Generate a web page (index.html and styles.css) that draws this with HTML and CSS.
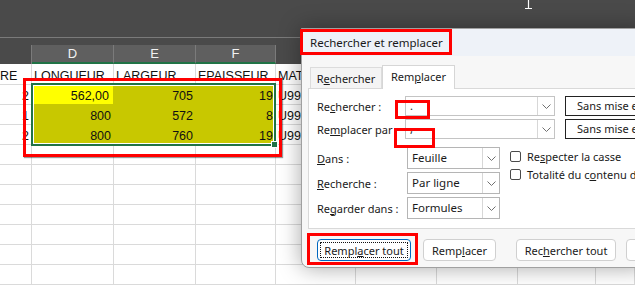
FILE: index.html
```html
<!DOCTYPE html>
<html lang="fr">
<head>
    <meta charset="UTF-8">
    <title>Rechercher et remplacer</title>
    <link rel="stylesheet" href="styles.css">
</head>
<body>
<div class="screen">

    <!-- Excel sheet -->
    <div class="sheet">
        <div class="ribbon"></div>
        <div class="namebar"></div>
        <div class="colheads">
            <div class="colhead sep"></div>
            <div class="colhead on">D</div>
            <div class="colhead on">E</div>
            <div class="colhead on">F</div>
            <div class="colhead"></div>
            <div class="colhead"></div>
            <div class="colhead"></div>
            <div class="colhead"></div>
            <div class="colhead"></div>
        </div>
        <div class="grid">
            <div class="c cut">RE</div><div class="c">LONGUEUR</div><div class="c">LARGEUR</div><div class="c">EPAISSEUR</div><div class="c">MATIERE</div><div class="c"></div><div class="c"></div><div class="c"></div><div class="c"></div>
            <div class="c num">2</div><div class="c num hl">562,00</div><div class="c num sel">705</div><div class="c num sel">19</div><div class="c">U99</div><div class="c"></div><div class="c"></div><div class="c"></div><div class="c"></div>
            <div class="c num">1</div><div class="c num sel">800</div><div class="c num sel">572</div><div class="c num sel">8</div><div class="c">U99</div><div class="c"></div><div class="c"></div><div class="c"></div><div class="c"></div>
            <div class="c num">2</div><div class="c num sel">800</div><div class="c num sel">760</div><div class="c num sel">19</div><div class="c">U99</div><div class="c"></div><div class="c"></div><div class="c"></div><div class="c"></div>
            <div class="c"></div><div class="c"></div><div class="c"></div><div class="c"></div><div class="c"></div><div class="c"></div><div class="c"></div><div class="c"></div><div class="c"></div>
            <div class="c"></div><div class="c"></div><div class="c"></div><div class="c"></div><div class="c"></div><div class="c"></div><div class="c"></div><div class="c"></div><div class="c"></div>
            <div class="c"></div><div class="c"></div><div class="c"></div><div class="c"></div><div class="c"></div><div class="c"></div><div class="c"></div><div class="c"></div><div class="c"></div>
            <div class="c"></div><div class="c"></div><div class="c"></div><div class="c"></div><div class="c"></div><div class="c"></div><div class="c"></div><div class="c"></div><div class="c"></div>
            <div class="c"></div><div class="c"></div><div class="c"></div><div class="c"></div><div class="c"></div><div class="c"></div><div class="c"></div><div class="c"></div><div class="c"></div>
            <div class="c"></div><div class="c"></div><div class="c"></div><div class="c"></div><div class="c"></div><div class="c"></div><div class="c"></div><div class="c"></div><div class="c"></div>
            <div class="c"></div><div class="c"></div><div class="c"></div><div class="c"></div><div class="c"></div><div class="c"></div><div class="c"></div><div class="c"></div><div class="c"></div>
        </div>
    </div>

    <!-- selected range -->
    <div class="selection"><span class="handle"></span></div>

    <!-- mouse cursor -->
    <svg class="cursor" width="9" height="10" viewBox="0 0 9 10">
        <path d="M4.5 0 V8.5 M1 8.5 H8" stroke="#fff" stroke-width="1.2" fill="none"/>
    </svg>

    <!-- Find & replace dialog -->
    <div class="dialog">
        <div class="titlebar">Rechercher et remplacer</div>
        <div class="tabs">
            <div class="tab">R<u>e</u>chercher</div>
            <div class="tab active">Rem<u>p</u>lacer</div>
        </div>
        <div class="panel">
            <div class="field">
                <span class="label">Re<u>c</u>hercher :</span>
                <div class="combo">
                    <span class="value">.</span>
                    <span class="drop"><svg width="9" height="5" viewBox="0 0 9 5"><polyline points="0.5,0.5 4.5,4.5 8.5,0.5" fill="none" stroke="#707070"/></svg></span>
                </div>
                <div class="format">Sans mise en forme</div>
            </div>
            <div class="field">
                <span class="label">Re<u>m</u>placer par</span>
                <div class="combo">
                    <span class="value">,</span>
                    <span class="drop"><svg width="9" height="5" viewBox="0 0 9 5"><polyline points="0.5,0.5 4.5,4.5 8.5,0.5" fill="none" stroke="#707070"/></svg></span>
                </div>
                <div class="format">Sans mise en forme</div>
            </div>

            <div class="opts">
                <div class="opt-col">
                    <div class="opt">
                        <span class="label wide"><u>D</u>ans :</span>
                        <div class="select">
                            <span class="value">Feuille</span>
                            <span class="drop"><svg width="9" height="5" viewBox="0 0 9 5"><polyline points="0.5,0.5 4.5,4.5 8.5,0.5" fill="none" stroke="#707070"/></svg></span>
                        </div>
                    </div>
                    <div class="opt">
                        <span class="label wide"><u>R</u>echerche :</span>
                        <div class="select">
                            <span class="value">Par ligne</span>
                            <span class="drop"><svg width="9" height="5" viewBox="0 0 9 5"><polyline points="0.5,0.5 4.5,4.5 8.5,0.5" fill="none" stroke="#707070"/></svg></span>
                        </div>
                    </div>
                    <div class="opt">
                        <span class="label wide">Re<u>g</u>arder dans :</span>
                        <div class="select">
                            <span class="value">Formules</span>
                            <span class="drop"><svg width="9" height="5" viewBox="0 0 9 5"><polyline points="0.5,0.5 4.5,4.5 8.5,0.5" fill="none" stroke="#707070"/></svg></span>
                        </div>
                    </div>
                </div>
                <div class="check-col">
                    <label class="check"><span class="box"></span>Re<u>s</u>pecter la casse</label>
                    <label class="check"><span class="box"></span>Totalité du c<u>o</u>ntenu de la cellule</label>
                </div>
            </div>
        </div>
        <div class="buttons">
            <button class="btn primary">Rempl<u>a</u>cer tout</button>
            <button class="btn">Remp<u>l</u>acer</button>
            <button class="btn wide-btn">Rec<u>h</u>ercher tout</button>
            <button class="btn">Suivant</button>
        </div>
    </div>

    <!-- red annotation boxes -->
    <div class="mark mark-range"></div>
    <div class="mark mark-title"></div>
    <div class="mark mark-find"></div>
    <div class="mark mark-replace"></div>
    <div class="mark mark-button"></div>
</div>
</body>
</html>
```

FILE: styles.css
```css
body {
    margin: 0;
    background: #fff;
}

.screen {
    position: relative;
    width: 635px;
    height: 285px;
    overflow: hidden;
}

/* Sheet */
.sheet {
    font-family: "Liberation Sans", Arial, sans-serif;
    font-size: 12.5px;
    color: #111;
}

.ribbon {
    height: 37px;
    background: #4a4a4a;
    border-bottom: 1px solid #7a7a7a;
}

.namebar {
    height: 7px;
    background: #4a4a4a;
}

.colheads,
.grid {
    display: grid;
    grid-template-columns: 32px 82px 82px 80px 80px 81px 81px 78px 1fr;
}

.colheads {
    height: 19px;
    background: #4a4a4a;
}

.colhead {
    box-sizing: border-box;
    color: #f2f2f2;
    font-size: 13px;
    text-align: center;
    line-height: 17px;
}

.colhead.sep {
    border-right: 1px solid #7b7b7b;
}

.colhead.on {
    background: #5f5f5f;
    border-right: 1px solid #7b7b7b;
    border-bottom: 2px solid #217346;
}

.grid {
    grid-template-rows: 21px;
    grid-auto-rows: 20px;
}

.c {
    box-sizing: border-box;
    border-right: 1px solid #dadada;
    border-bottom: 1px solid #dadada;
    padding: 0 2px;
    display: flex;
    align-items: flex-end;
    line-height: 15px;
    white-space: nowrap;
    overflow: visible;
}

.c.cut {
    padding-left: 0;
    overflow: hidden;
}

.num {
    justify-content: flex-end;
}

.sel {
    background: #c8c800;
    border-color: #c8c800;
}

.hl {
    background: #ffff00;
    border-right-color: #c8c800;
    border-bottom-color: #c8c800;
    padding-right: 4px;
}

.selection {
    position: absolute;
    left: 31px;
    top: 83px;
    width: 245px;
    height: 63px;
    box-sizing: border-box;
    border: 2px solid #217346;
    box-shadow: inset 0 0 0 1px #fff;
}

.handle {
    position: absolute;
    right: -4px;
    bottom: -4px;
    width: 5px;
    height: 5px;
    background: #217346;
    border: 1px solid #fff;
}

.cursor {
    position: absolute;
    left: 524px;
    top: 0;
}

/* Dialog */
.dialog {
    position: absolute;
    left: 301px;
    top: 28px;
    width: 345px;
    height: 240px;
    box-sizing: border-box;
    background: #f7f7f7;
    border: 1px solid #a0a0a0;
    border-radius: 0 0 0 8px;
    box-shadow: 0 0 22px rgba(0, 0, 0, 0.35);
    font-family: "Noto Sans", "Open Sans", sans-serif;
    font-size: 11px;
    color: #1a1a1a;
    display: flex;
    flex-direction: column;
}

.titlebar {
    height: 27px;
    background: #eef2f8;
    display: flex;
    align-items: center;
    padding-left: 8px;
    font-size: 11.5px;
}

.tabs {
    display: flex;
    align-items: flex-end;
    height: 23px;
    margin: 9px 0 0 8px;
    position: relative;
    z-index: 1;
}

.tab {
    box-sizing: border-box;
    width: 72px;
    height: 21px;
    background: #f4f4f4;
    border: 1px solid #dcdcdc;
    border-bottom: none;
    text-align: center;
    line-height: 21px;
}

.tab.active {
    width: 73px;
    height: 24px;
    margin-bottom: -1px;
    background: #fff;
    border-color: #d6d6d6;
    line-height: 22px;
}

.panel {
    box-sizing: border-box;
    height: 141px;
    margin-left: 6px;
    padding: 7px 0 0 8px;
    background: #fff;
    border: 1px solid #d9d9d9;
    border-right: none;
}

.field {
    display: flex;
    align-items: center;
    height: 20px;
    margin-bottom: 3px;
}

.label {
    width: 88px;
    flex: none;
}

.label.wide {
    width: 90px;
}

.combo,
.select {
    box-sizing: border-box;
    display: flex;
    background: #fff;
    border: 1px solid #c4c4c4;
}

.combo {
    width: 152px;
    height: 20px;
}

.select {
    width: 93px;
    height: 22px;
    border-color: #b5b5b5;
}

.value {
    flex: 1;
    padding-left: 4px;
    line-height: 18px;
}

.select .value {
    line-height: 20px;
    font-size: 11.5px;
}

.drop {
    width: 16px;
    flex: none;
    display: flex;
    align-items: center;
    justify-content: center;
    border-left: 1px solid #d7d7d7;
}

.format {
    box-sizing: border-box;
    flex: none;
    width: 80px;
    height: 20px;
    margin-left: 10px;
    padding-left: 11px;
    border: 1px solid #222;
    line-height: 18px;
    white-space: nowrap;
    overflow: hidden;
}

.opts {
    display: flex;
    margin-top: 8px;
}

.opt-col {
    display: flex;
    flex-direction: column;
    gap: 3px;
}

.opt {
    display: flex;
    align-items: center;
}

.check-col {
    margin-left: 10px;
}

.check {
    display: flex;
    align-items: center;
    height: 18px;
    white-space: nowrap;
}

.box {
    box-sizing: border-box;
    width: 11px;
    height: 11px;
    margin-right: 6px;
    border: 1px solid #4a4a4a;
    border-radius: 2px;
}

.buttons {
    display: flex;
    margin: 10px 0 0 15px;
}

.btn {
    box-sizing: border-box;
    flex: none;
    width: 73px;
    height: 22px;
    margin-right: 12px;
    padding: 0;
    background: #fff;
    border: 1px solid #d0d0d0;
    border-radius: 4px;
    font-family: inherit;
    font-size: 11px;
    color: #1a1a1a;
}

.btn.primary {
    width: 94px;
    border-color: #0067c0;
    outline: 1px dotted #111;
    outline-offset: -4px;
}

.btn.wide-btn {
    width: 100px;
    margin-left: 8px;
    margin-right: 10px;
}

/* Red annotations */
.mark {
    position: absolute;
    box-sizing: border-box;
    border: 3px solid #f00;
}

.mark-range {
    left: 23px;
    top: 78px;
    width: 259px;
    height: 79px;
    box-shadow: 1px 1px 1px rgba(0, 0, 0, 0.4);
}

.mark-title {
    left: 300px;
    top: 29px;
    width: 152px;
    height: 26px;
}

.mark-find {
    left: 395px;
    top: 100px;
    width: 35px;
    height: 19px;
}

.mark-replace {
    left: 394px;
    top: 128px;
    width: 41px;
    height: 20px;
}

.mark-button {
    left: 307px;
    top: 233px;
    width: 111px;
    height: 32px;
}
```
